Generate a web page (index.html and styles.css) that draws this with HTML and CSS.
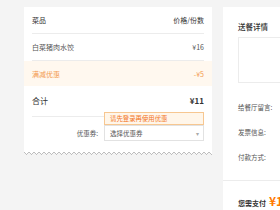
FILE: index.html
```html
<!DOCTYPE html>
<html lang="zh">
<head>
<meta charset="utf-8">
<link rel="stylesheet" href="styles.css">
</head>
<body>
<div class="page">
  <div class="order">
    <div class="card">
      <div class="row head"><span>菜品</span><span>价格/份数</span></div>
      <div class="row item"><span>白菜猪肉水饺</span><span>¥16</span></div>
      <div class="row promo"><span>满减优惠</span><span>-¥5</span></div>
      <div class="row total"><span>合计</span><span class="sum">¥11</span></div>
      <div class="coupon">
        <span class="label">优惠券:</span>
        <div class="select-wrap">
          <div class="tip">请先登录再使用优惠</div>
          <div class="select"><span>选择优惠券</span><span class="arrow">▾</span></div>
        </div>
      </div>
    </div>
    <div class="zigzag"></div>
  </div>
  <div class="detail">
    <div class="detail-body">
      <div class="title">送餐详情</div>
      <div class="addr"></div>
      <div class="field first">给餐厅留言:</div>
      <div class="field">发票信息:</div>
      <div class="field">付款方式:</div>
    </div>
    <div class="pay"><span class="pay-label">您需支付</span><span class="pay-amount">¥11</span></div>
  </div>
</div>
</body>
</html>
```

FILE: styles.css
```css
html, body {
  margin: 0;
  padding: 0;
  background: #f4f4f4;
  font-family: "Noto Sans CJK SC", "Liberation Sans", sans-serif;
  overflow: hidden;
}
.page {
  display: flex;
  gap: 11px;
  padding: 7px 0 0 24px;
  width: 400px;
}
.order {
  flex: none;
  width: 188px;
}
.card {
  background: #fff;
}
.row {
  display: flex;
  justify-content: space-between;
  align-items: center;
  margin: 0 8px;
  height: 26px;
  border-bottom: 1px solid #ececec;
  font-size: 7px;
  line-height: 10px;
  color: #555;
}
.head {
  color: #333;
}
.promo {
  margin: 0;
  padding: 0 8px;
  height: 25px;
  border-bottom: 0;
  background: #fff8ef;
  color: #f39a4e;
}
.total {
  height: 30px;
  font-size: 8px;
  color: #333;
}
.sum {
  font-weight: bold;
}
.coupon {
  display: flex;
  justify-content: flex-end;
  align-items: center;
  gap: 6px;
  padding: 8px 8px 10px 0;
}
.label {
  font-size: 6.5px;
  color: #555;
}
.select-wrap {
  position: relative;
  width: 100px;
}
.tip {
  position: absolute;
  left: 0;
  right: 0;
  bottom: 100%;
  height: 13px;
  box-sizing: border-box;
  border: 1px solid #f7c791;
  background: #fff6ea;
  color: #f2731c;
  font-size: 6.4px;
  line-height: 11px;
  padding-left: 5px;
}
.select {
  display: flex;
  justify-content: space-between;
  align-items: center;
  height: 16px;
  box-sizing: border-box;
  border: 1px solid #e2e2e2;
  padding: 0 4px 0 5px;
  font-size: 6.5px;
  color: #555;
}
.arrow {
  color: #aaa;
  font-size: 6px;
}
.zigzag {
  height: 3px;
  background: conic-gradient(from -45deg at 50% 100%, #fff 90deg, transparent 0);
  background-size: 5px 3px;
  filter: drop-shadow(0 1px 0.6px rgba(0,0,0,0.22));
}
.detail {
  flex: none;
  width: 140px;
  height: 260px;
  background: #fff;
  padding-top: 15px;
}
.detail-body {
  padding-left: 15px;
}
.title {
  font-size: 7.5px;
  line-height: 10px;
  color: #333;
  font-weight: 500;
}
.addr {
  margin-top: 5px;
  height: 46px;
  box-sizing: border-box;
  border: 1px solid #ececec;
  border-right: 0;
}
.field {
  font-size: 6.5px;
  line-height: 10px;
  color: #555;
  margin-top: 15px;
}
.field.first {
  margin-top: 19px;
}
.pay {
  margin-top: 18px;
  border-top: 1px solid #ececec;
  padding: 11px 15px 0;
  display: flex;
  align-items: baseline;
  gap: 3px;
}
.pay-label {
  font-size: 7px;
  font-weight: bold;
  color: #333;
}
.pay-amount {
  font-size: 12px;
  font-weight: bold;
  color: #ff7a00;
}
```
